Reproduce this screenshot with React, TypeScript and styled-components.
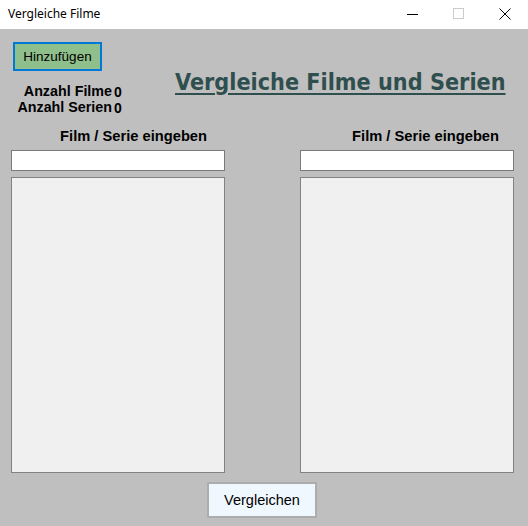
import React from "react";
import styled, { createGlobalStyle } from "styled-components";

const Global = createGlobalStyle`
  html, body { margin: 0; padding: 0; width: 528px; height: 526px; overflow: hidden; }
  body { font-family: "Liberation Sans", Arial, sans-serif; }
  * { box-sizing: border-box; }
`;

const Window = styled.div`
  width: 528px;
  height: 526px;
  display: flex;
  flex-direction: column;
  background: #bfbfbf;
`;

const TitleBar = styled.div`
  height: 29px;
  flex: none;
  background: #ffffff;
  display: flex;
  align-items: center;
`;

const TitleText = styled.div`
  flex: 1;
  padding-left: 8px;
  font-family: "Noto Sans", "Open Sans", sans-serif;
  font-size: 12px;
  color: #000;
  padding-bottom: 2px;
`;

const CaptionButton = styled.div`
  width: 46px;
  height: 29px;
  display: flex;
  align-items: center;
  justify-content: center;
  color: ${(p: { $disabled?: boolean }) => (p.$disabled ? "#cccccc" : "#000000")};
  padding-bottom: 2px;
`;

const Client = styled.div`
  flex: 1;
  display: flex;
  flex-direction: column;
`;

const Header = styled.div`
  display: flex;
  height: 99px;
`;

const HeaderLeft = styled.div`
  width: 175px;
  display: flex;
  flex-direction: column;
  padding-top: 13px;
`;

const AddButton = styled.button`
  margin-left: 13px;
  width: 89px;
  height: 29px;
  background: #8fbf8b;
  border: 2px solid #0078d7;
  font-family: "Liberation Sans", Arial, sans-serif;
  font-size: 13.5px;
  color: #000;
  padding: 0 0 1px 0;
`;

const Stats = styled.div`
  margin-top: 12px;
  display: grid;
  grid-template-columns: 112px auto;
  grid-auto-rows: 16px;
  column-gap: 2px;
  font-weight: bold;
  font-size: 14.3px;
  color: #000;
  line-height: 16px;
`;

const StatLabel = styled.div`
  text-align: right;
  white-space: nowrap;
`;

const StatValue = styled.div`
  font-size: 14px;
  font-weight: bold;
  padding-top: 1px;
`;

const BigTitle = styled.h1`
  margin: 39px 0 0 0;
  font-family: "DejaVu Sans Condensed", "DejaVu Sans", sans-serif;
  font-weight: bold;
  font-size: 23.2px;
  line-height: 28px;
  color: #2f4f4f;
  text-decoration: underline;
  text-decoration-thickness: 2px;
  text-underline-offset: 3px;
  white-space: nowrap;
`;

const Columns = styled.div`
  display: grid;
  grid-template-columns: 214px 214px;
  column-gap: 75px;
  padding-left: 11px;
`;

const Panel = styled.div`
  display: flex;
  flex-direction: column;
`;

const PanelLabel = styled.div`
  height: 16px;
  font-weight: bold;
  font-size: 14.7px;
  line-height: 16px;
  color: #000;
  text-align: right;
  white-space: nowrap;
  padding-right: ${(p: { $pr: number }) => p.$pr}px;
  margin-bottom: 6px;
`;

const TextInput = styled.input`
  height: 21px;
  border: 1px solid #7a7a7a;
  background: #ffffff;
  outline: none;
  margin: 0 0 6px 0;
  padding: 0 2px;
  font-family: "Liberation Sans", Arial, sans-serif;
  font-size: 13px;
`;

const ListBox = styled.div`
  height: 296px;
  border: 1px solid #828282;
  background: #f0f0f0;
`;

const Footer = styled.div`
  display: flex;
  justify-content: center;
  padding-top: 9px;
  padding-right: 4px;
`;

const CompareButton = styled.button`
  width: 110px;
  height: 36px;
  background: #f0f8ff;
  border: 2px solid #adadad;
  font-family: "Liberation Sans", Arial, sans-serif;
  font-size: 14.5px;
  color: #000;
  padding: 0 0 1px 0;
`;

export default function App() {
  return (
    <>
      <Global />
      <Window>
        <TitleBar>
          <TitleText>Vergleiche Filme</TitleText>
          <CaptionButton>
            <svg width="12" height="12" viewBox="0 0 12 12">
              <line x1="0" y1="6.5" x2="11" y2="6.5" stroke="currentColor" strokeWidth="1" />
            </svg>
          </CaptionButton>
          <CaptionButton $disabled>
            <svg width="12" height="12" viewBox="0 0 12 12">
              <rect x="0.5" y="0.5" width="10" height="10" fill="none" stroke="currentColor" strokeWidth="1" />
            </svg>
          </CaptionButton>
          <CaptionButton>
            <svg width="12" height="12" viewBox="0 0 12 12">
              <path d="M0.5 0.5 L11.5 11.5 M11.5 0.5 L0.5 11.5" stroke="currentColor" strokeWidth="1" />
            </svg>
          </CaptionButton>
        </TitleBar>
        <Client>
          <Header>
            <HeaderLeft>
              <AddButton>Hinzufügen</AddButton>
              <Stats>
                <StatLabel>Anzahl Filme</StatLabel>
                <StatValue>0</StatValue>
                <StatLabel>Anzahl Serien</StatLabel>
                <StatValue>0</StatValue>
              </Stats>
            </HeaderLeft>
            <BigTitle>Vergleiche Filme und Serien</BigTitle>
          </Header>
          <Columns>
            <Panel>
              <PanelLabel $pr={18}>Film / Serie eingeben</PanelLabel>
              <TextInput />
              <ListBox />
            </Panel>
            <Panel>
              <PanelLabel $pr={15}>Film / Serie eingeben</PanelLabel>
              <TextInput />
              <ListBox />
            </Panel>
          </Columns>
          <Footer>
            <CompareButton>Vergleichen</CompareButton>
          </Footer>
        </Client>
      </Window>
    </>
  );
}
